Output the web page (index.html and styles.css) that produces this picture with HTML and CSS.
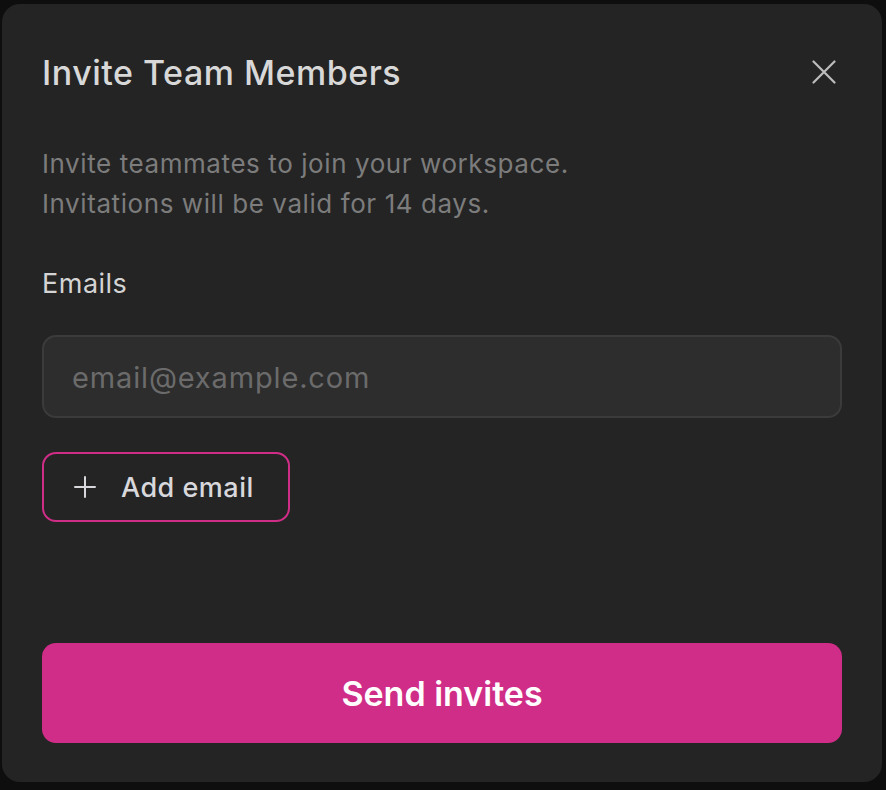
FILE: index.html
```html
<!DOCTYPE html>
<html lang="en">
<head>
<meta charset="utf-8">
<link rel="stylesheet" href="styles.css">
</head>
<body>
<div class="modal">
  <div class="header">
    <h1 class="title">Invite Team Members</h1>
    <button class="close" aria-label="Close">
      <svg width="24" height="24" viewBox="0 0 24 24" fill="none" stroke="#bdbdbd" stroke-width="2.2" stroke-linecap="round"><path d="M1.5 1.5L22.5 22.5M22.5 1.5L1.5 22.5"/></svg>
    </button>
  </div>
  <p class="desc">Invite teammates to join your workspace.<br>Invitations will be valid for 14 days.</p>
  <div class="label">Emails</div>
  <input class="email" type="text" placeholder="email@example.com">
  <button class="add">
    <svg width="22" height="22" viewBox="0 0 22 22" fill="none" stroke="#d8d8dc" stroke-width="2" stroke-linecap="round"><path d="M11 1V21M1 11H21"/></svg>
    <span>Add email</span>
  </button>
  <div class="spacer"></div>
  <button class="send">Send invites</button>
</div>
</body>
</html>
```
FILE: styles.css
```css
html, body {
  margin: 0;
  padding: 0;
  background: #0e0e0e;
}
body {
  font-family: Inter, "Noto Sans", sans-serif;
  width: 886px;
  height: 790px;
  overflow: hidden;
}
.modal {
  box-sizing: border-box;
  margin: 4px 4px 0 2px;
  height: 778px;
  background: #242424;
  border-radius: 18px;
  padding: 0 40px 39px 40px;
  display: flex;
  flex-direction: column;
}
.header {
  box-sizing: border-box;
  height: 140px;
  padding-top: 49px;
  display: flex;
  align-items: flex-start;
  justify-content: space-between;
}
.title {
  margin: 0;
  font-size: 34px;
  line-height: 40px;
  font-weight: 500;
  color: #d8d8d8;
  letter-spacing: 0.5px;
}
.close {
  background: none;
  border: none;
  padding: 0;
  margin-top: 7px;
  margin-right: 6px;
  width: 24px;
  height: 24px;
  display: flex;
}
.desc {
  margin: 0;
  font-size: 26px;
  line-height: 40px;
  letter-spacing: 0.58px;
  color: #7c7c7c;
}
.label {
  margin-top: 40px;
  font-size: 27px;
  line-height: 40px;
  letter-spacing: 0.5px;
  color: #d4d4d4;
}
.email {
  box-sizing: border-box;
  margin-top: 31px;
  width: 800px;
  height: 83px;
  background: #2d2d2d;
  border: 2px solid #3b3b3b;
  border-radius: 14px;
  padding: 2px 28px 0;
  font-family: inherit;
  font-size: 29px;
  letter-spacing: 0.85px;
  color: #d8d8d8;
  outline: none;
}
.email::placeholder {
  color: #6b6b6b;
}
.add {
  box-sizing: border-box;
  margin-top: 34px;
  width: 248px;
  height: 70px;
  background: transparent;
  border: 2px solid #d02d87;
  border-radius: 14px;
  display: flex;
  align-items: center;
  gap: 25px;
  padding: 0 0 0 30px;
  font-family: inherit;
  font-size: 27px;
  font-weight: 500;
  letter-spacing: 0.5px;
  color: #d8d8dc;
}
.spacer { flex: 1; }
.send {
  width: 800px;
  height: 100px;
  background: #cf2d87;
  border: none;
  border-radius: 14px;
  font-family: inherit;
  font-size: 34px;
  font-weight: 600;
  color: #ffffff;
}
```
